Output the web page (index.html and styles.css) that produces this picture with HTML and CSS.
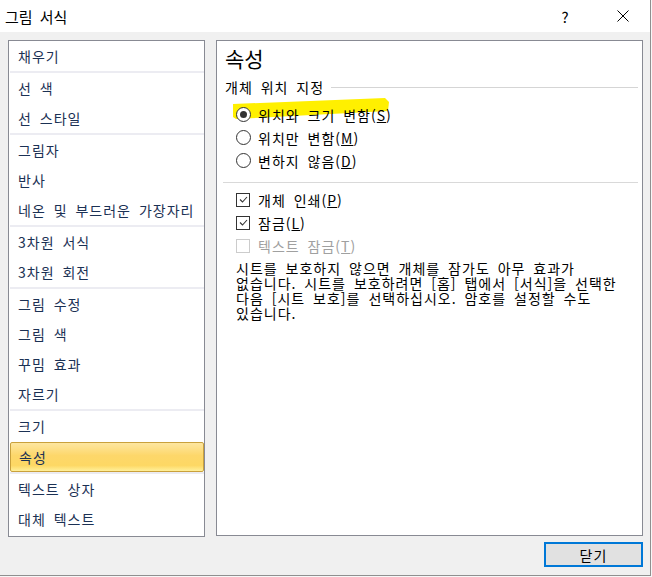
FILE: index.html
```html
<!DOCTYPE html>
<html lang="ko">
<head>
  <meta charset="utf-8">
  <title>그림 서식</title>
  <link rel="stylesheet" href="styles.css">
</head>
<body>
<div class="window">
  <div class="titlebar">
    <span class="title">그림 서식</span>
    <span class="help">?</span>
    <span class="close">
      <svg width="12" height="12" viewBox="0 0 12 12"><path d="M0.5 0.5 L11.5 11.5 M11.5 0.5 L0.5 11.5" stroke="#000" stroke-width="1" fill="none"/></svg>
    </span>
  </div>

  <div class="dialog-body">
    <ul class="nav">
      <li>채우기</li>
      <li class="sep"></li>
      <li>선 색</li>
      <li>선 스타일</li>
      <li class="sep"></li>
      <li>그림자</li>
      <li>반사</li>
      <li>네온 및 부드러운 가장자리</li>
      <li class="sep"></li>
      <li>3차원 서식</li>
      <li>3차원 회전</li>
      <li class="sep"></li>
      <li>그림 수정</li>
      <li>그림 색</li>
      <li>꾸밈 효과</li>
      <li>자르기</li>
      <li class="sep"></li>
      <li>크기</li>
      <li class="active">속성</li>
      <li class="sep"></li>
      <li>텍스트 상자</li>
      <li>대체 텍스트</li>
    </ul>

    <div class="pane">
      <div class="pane-title">속성</div>
      <div class="group-label"><span>개체 위치 지정</span><span class="rule"></span></div>

      <div class="option marked">
        <svg class="marker" width="158" height="22" viewBox="0 0 158 22"><polygon points="0,6 152,0 156,4 155,13 3,21 0,19" fill="#fff000"/></svg>
        <span class="radio checked"></span>
        <span class="label">위치와 크기 변함(<u>S</u>)</span>
      </div>
      <div class="option">
        <span class="radio"></span>
        <span class="label">위치만 변함(<u>M</u>)</span>
      </div>
      <div class="option">
        <span class="radio"></span>
        <span class="label">변하지 않음(<u>D</u>)</span>
      </div>

      <div class="divider"></div>

      <div class="option check-row first">
        <span class="check"><svg width="11" height="11" viewBox="0 0 11 11"><path d="M2 5.5 L4.5 8 L9 3" stroke="#333" stroke-width="1.1" fill="none"/></svg></span>
        <span class="label">개체 인쇄(<u>P</u>)</span>
      </div>
      <div class="option check-row">
        <span class="check"><svg width="11" height="11" viewBox="0 0 11 11"><path d="M2 5.5 L4.5 8 L9 3" stroke="#333" stroke-width="1.1" fill="none"/></svg></span>
        <span class="label">잠금(<u>L</u>)</span>
      </div>
      <div class="option check-row disabled">
        <span class="check"></span>
        <span class="label">텍스트 잠금(<u>T</u>)</span>
      </div>

      <p class="note">시트를 보호하지 않으면 개체를 잠가도 아무 효과가<br>없습니다. 시트를 보호하려면 [홈] 탭에서 [서식]을 선택한<br>다음 [시트 보호]를 선택하십시오. 암호를 설정할 수도<br>있습니다.</p>
    </div>
  </div>

  <div class="footer">
    <button>닫기</button>
  </div>
</div>
</body>
</html>
```

FILE: styles.css
```css
body {
  margin: 0;
  background-color: #f7f7f7;
  font-family: "Noto Sans CJK KR", "Noto Sans", sans-serif;
  color: #000;
}

.window {
  width: 650px;
  height: 575px;
  background-color: #f0f0f0;
  border-right: 1px solid #8f8f8f;
  border-bottom: 1px solid #8f8f8f;
  display: flex;
  flex-direction: column;
}

.titlebar {
  height: 32px;
  background-color: #fff;
  display: flex;
  align-items: center;
  padding-left: 5px;
}

.title {
  font-size: 15px;
  word-spacing: 3px;
}

.help {
  margin-left: auto;
  font-size: 15px;
  width: 10px;
  text-align: center;
}

.close {
  width: 12px;
  height: 12px;
  margin-left: 47px;
  margin-right: 21px;
  display: flex;
}

.dialog-body {
  display: flex;
  gap: 11px;
  padding: 8px 7px 0 8px;
}

.nav {
  list-style: none;
  margin: 0;
  padding: 0 0 1px 0;
  width: 195px;
  height: 494px;
  background-color: #fff;
  border: 1px solid #888a93;
}

.nav li {
  height: 30px;
  line-height: 30px;
  padding-left: 9px;
  font-size: 14px;
  letter-spacing: 1px;
  word-spacing: 3px;
  color: #1b3154;
  white-space: nowrap;
}

.nav li.sep {
  height: 2px;
  margin: 0 0 0 1px;
  padding: 0;
  background-color: #ececf2;
}

.nav li.active {
  box-sizing: border-box;
  height: 30px;
  line-height: 28px;
  margin: 1px 0 0 1px;
  padding-left: 8px;
  border: 1px solid #c9a13c;
  border-radius: 2px;
  background: linear-gradient(#fde6a0, #fdd76a 45%, #fdd864 80%, #fff09a);
}

.pane {
  flex: 1;
  height: 494px;
  background-color: #fff;
  border: 1px solid #888a93;
  padding: 0 4px 0 8px;
}

.pane-title {
  font-size: 21px;
  line-height: 28px;
  margin-top: 3px;
}

.group-label {
  display: flex;
  align-items: center;
  margin-top: 5px;
  font-size: 14px;
  line-height: 20px;
  letter-spacing: 1px;
  word-spacing: 3px;
}

.group-label .rule {
  flex: 1;
  margin-left: 7px;
  border-top: 1px solid #d5d5d5;
}

.option {
  position: relative;
  display: flex;
  align-items: center;
  height: 23px;
  padding-left: 11px;
  font-size: 14px;
  letter-spacing: 1px;
  word-spacing: 3px;
  white-space: nowrap;
}

.option.marked {
  margin-top: 6px;
}

.marker {
  position: absolute;
  left: 8px;
  top: -5px;
}

.radio {
  position: relative;
  box-sizing: border-box;
  width: 15px;
  height: 15px;
  border: 1px solid #333;
  border-radius: 50%;
  background-color: #fff;
  margin-right: 7px;
}

.radio.checked::after {
  content: "";
  position: absolute;
  left: 3px;
  top: 3px;
  width: 7px;
  height: 7px;
  border-radius: 50%;
  background-color: #333;
}

.label {
  position: relative;
}

.divider {
  margin: 10px 0 0 -2px;
  border-top: 1px solid #d9d9d9;
}

.check-row {
  height: 23px;
}

.check-row.first {
  margin-top: 5px;
}

.check-row.disabled {
  color: #a0a0a0;
}

.check {
  box-sizing: border-box;
  width: 14px;
  height: 14px;
  border: 1px solid #333;
  background-color: #fff;
  margin-right: 8px;
  display: flex;
  align-items: center;
  justify-content: center;
}

.disabled .check {
  border-color: #cccccc;
}

.note {
  margin: 4px 0 0 0;
  padding-left: 11px;
  font-size: 14px;
  line-height: 15px;
  letter-spacing: 1px;
  word-spacing: 3px;
  white-space: nowrap;
}

.footer {
  display: flex;
  justify-content: flex-end;
  padding: 5px 7px 0 0;
}

.footer button {
  width: 99px;
  height: 25px;
  background-color: #e1e1e1;
  border: 2px solid #0078d7;
  font-family: "Noto Sans CJK KR", sans-serif;
  font-size: 14px;
  letter-spacing: 1px;
  color: #000;
  padding: 0;
}
```
